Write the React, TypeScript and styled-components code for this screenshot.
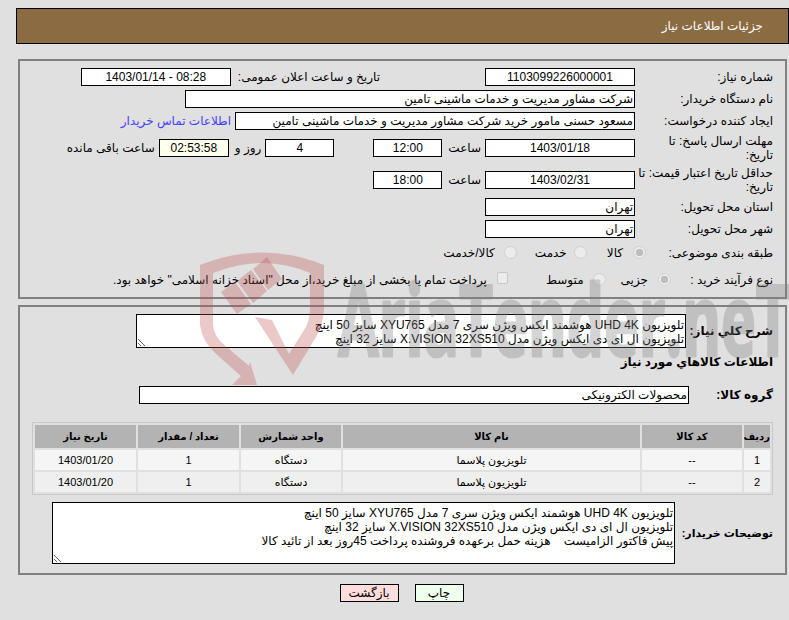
import styled, { createGlobalStyle } from 'styled-components'

const line1 = 'تلویزیون UHD 4K هوشمند ایکس ویژن سری 7 مدل XYU765 سایز 50 اینچ'
const line2 = 'تلویزیون ال ای دی ایکس ویژن مدل X.VISION 32XS510 سایز 32 اینچ'
const line3 = 'پیش فاکتور الزامیست    هزینه حمل برعهده فروشنده پرداخت 45روز بعد از تائید کالا'

const items = [
    { row: 1, code: '--', name: 'تلویزیون پلاسما', unit: 'دستگاه', count: 1, date: '1403/01/20' },
    { row: 2, code: '--', name: 'تلویزیون پلاسما', unit: 'دستگاه', count: 1, date: '1403/01/20' },
]

export default function App() {
    return (
        <Page dir="rtl">
            <GlobalStyle />
            <Header>جزئیات اطلاعات نیاز</Header>

            <InfoPanel>
                <Row>
                    <Label>شماره نیاز:</Label>
                    <Field $w={150} $center>1103099226000001</Field>
                    <Text $mr={105}>تاریخ و ساعت اعلان عمومی:</Text>
                    <Field $w={150} $mr={7} $center dir="ltr">1403/01/14 - 08:28</Field>
                </Row>
                <Row>
                    <Label>نام دستگاه خریدار:</Label>
                    <Field $w={450}>شرکت مشاور مدیریت و خدمات ماشینی تامین</Field>
                </Row>
                <Row>
                    <Label>ایجاد کننده درخواست:</Label>
                    <Field $w={400}>مسعود حسنی مامور خرید شرکت مشاور مدیریت و خدمات ماشینی تامین</Field>
                    <ContactLink href="#" $mr={4}>اطلاعات تماس خریدار</ContactLink>
                </Row>
                <Row $h={32}>
                    <Label>مهلت ارسال پاسخ: تا<br />تاریخ:</Label>
                    <Field $w={150} $center>1403/01/18</Field>
                    <Text $mr={4}>ساعت</Text>
                    <Field $w={69} $mr={6} $center>12:00</Field>
                    <Field $w={69} $mr={39} $center>4</Field>
                    <Text $mr={4}>روز و</Text>
                    <Field $w={70} $mr={6} $center $bg="#ffffee">02:53:58</Field>
                    <Text $mr={4}>ساعت باقی مانده</Text>
                </Row>
                <Row $h={32}>
                    <Label>حداقل تاریخ اعتبار قیمت: تا<br />تاریخ:</Label>
                    <Field $w={150} $center>1403/02/31</Field>
                    <Text $mr={4}>ساعت</Text>
                    <Field $w={69} $mr={6} $center>18:00</Field>
                </Row>
                <Row>
                    <Label>استان محل تحویل:</Label>
                    <Field $w={150}>تهران</Field>
                </Row>
                <Row>
                    <Label>شهر محل تحویل:</Label>
                    <Field $w={150}>تهران</Field>
                </Row>
                <Row $h={26}>
                    <Label $w={127} $gap={0}>طبقه بندی موضوعی:</Label>
                    <Radio name="category" disabled defaultChecked />
                    <Text $mr={10}>کالا</Text>
                    <Radio name="category" disabled $mr={20} />
                    <Text $mr={7}>خدمت</Text>
                    <Radio name="category" disabled $mr={18} />
                    <Text $mr={9}>کالا/خدمت</Text>
                </Row>
                <Row $h={28}>
                    <Label $w={102} $gap={0}>نوع فرآیند خرید :</Label>
                    <Radio name="process" disabled defaultChecked />
                    <Text $mr={10}>جزیی</Text>
                    <Radio name="process" disabled $mr={15} />
                    <Text $mr={9}>متوسط</Text>
                    <Check disabled $mr={38} />
                    <Text $mr={10}>پرداخت تمام یا بخشی از مبلغ خرید،از محل "اسناد خزانه اسلامی" خواهد بود.</Text>
                </Row>
            </InfoPanel>

            <GoodsPanel>
                <Row $h={34}>
                    <Label $w={87} $gap={0} $bold>شرح کلي نیاز:</Label>
                    <Notes $w={550} $h={34} readOnly defaultValue={`${line1}\n${line2}`} />
                </Row>
                <SectionTitle>اطلاعات کالاهاي مورد نياز</SectionTitle>
                <Row $h={18}>
                    <Label $w={84} $gap={0} $bold>گروه کالا:</Label>
                    <Field $w={550}>محصولات الکترونیکی</Field>
                </Row>
                <GoodsTable>
                    <thead>
                        <tr>
                            <HeadCell $w={26}>ردیف</HeadCell>
                            <HeadCell $w={100}>کد کالا</HeadCell>
                            <HeadCell $w={297}>نام کالا</HeadCell>
                            <HeadCell $w={100}>واحد شمارش</HeadCell>
                            <HeadCell $w={101}>تعداد / مقدار</HeadCell>
                            <HeadCell $w={101}>تاریخ نیاز</HeadCell>
                        </tr>
                    </thead>
                    <tbody>
                        {items.map((item) => (
                            <GoodsRow key={item.row}>
                                <td>{item.row}</td>
                                <td>{item.code}</td>
                                <td>{item.name}</td>
                                <td>{item.unit}</td>
                                <td>{item.count}</td>
                                <td>{item.date}</td>
                            </GoodsRow>
                        ))}
                    </tbody>
                </GoodsTable>
                <Row $h={62}>
                    <Label $w={98} $gap={0} $bold $size={11}>توضیحات خریدار:</Label>
                    <Notes $w={623} $h={62} readOnly defaultValue={`${line1}\n${line2}\n${line3}`} />
                </Row>
            </GoodsPanel>

            <Actions>
                <ActionButton $bg="#eeffee" $w={49}>چاپ</ActionButton>
                <ActionButton $bg="#ffdddd" $w={59}>بازگشت</ActionButton>
            </Actions>

            <Watermark viewBox="0 0 594 141" aria-hidden="true">
                {/* shield, gavel and arrow of the logo */}
                <g fill="rgba(190,77,77,0.3)">
                    <path d="M5 20 Q68 -5 129 20 L129 65 Q128 80 121 92 L98 130 L60 72 L77 75 L94 109 L111 82 Q115 73 115 62 L115 28 Q68 8 18 28 L18 80 Q19 90 26 97 L54 121 L55 117 L62 140 L37 140 L46 131 L20 108 Q7 96 5 80 Z" />
                    <path d="M26 47 L40 37 L56 59 L42 69 Z" />
                    <path d="M42 36 L56 25 L72 46 L58 58 Z" />
                    <path d="M58 24 L72 12 L87 34 L73 45 Z" />
                </g>
                <WatermarkText x="143" y="111" textLength="452" lengthAdjust="spacingAndGlyphs">AriaTender.neT</WatermarkText>
            </Watermark>
        </Page>
    )
}

const GlobalStyle = createGlobalStyle`
    html, body {
        margin: 0;
        background: #e0e0e0;
        overflow: hidden;
    }
    * {
        box-sizing: border-box;
    }
`

const Page = styled.div`
    position: relative;
    width: 789px;
    height: 620px;
    padding-top: 8px;
    font-family: "Liberation Sans", "DejaVu Sans", sans-serif;
    font-size: 12px;
    color: #000;
`

const Header = styled.div`
    display: flex;
    align-items: center;
    width: 773px;
    height: 36px;
    margin-right: 0;
    margin-left: 16px;
    padding-right: 25px;
    background: #8b6b42;
    border: 1px solid #000;
    color: #fff;
    font-size: 12px;
`

const Panel = styled.div`
    width: 769px;
    margin: 0 2px 0 18px;
    padding-right: 12px;
    border: 2px solid #808080;
`

const InfoPanel = styled(Panel)`
    height: 240px;
    margin-top: 15px;
    padding-top: 5px;
`

const GoodsPanel = styled(Panel)`
    height: 270px;
    margin-top: 6px;
    padding-top: 7px;
`

const Row = styled.div<{ $h?: number }>`
    display: flex;
    align-items: center;
    height: ${(p) => p.$h ?? 22}px;
`

const Label = styled.div<{ $w?: number; $gap?: number; $bold?: boolean; $size?: number }>`
    flex: none;
    width: ${(p) => p.$w ?? 133}px;
    margin-left: ${(p) => p.$gap ?? 5}px;
    font-size: ${(p) => p.$size ?? 12}px;
    font-weight: ${(p) => (p.$bold ? 'bold' : 'normal')};
    line-height: 14px;
    white-space: nowrap;
`

const Text = styled.span<{ $mr?: number }>`
    flex: none;
    margin-right: ${(p) => p.$mr ?? 0}px;
`

const ContactLink = styled.a<{ $mr?: number }>`
    margin-right: ${(p) => p.$mr ?? 0}px;
    color: #3f3fff;
    text-decoration: none;
`

const Field = styled.div<{ $w: number; $mr?: number; $center?: boolean; $bg?: string }>`
    flex: none;
    width: ${(p) => p.$w}px;
    height: 18px;
    margin-right: ${(p) => p.$mr ?? 0}px;
    padding: 0 1px;
    background: ${(p) => p.$bg ?? '#fff'};
    border: 1px solid #000;
    line-height: 16px;
    text-align: ${(p) => (p.$center ? 'center' : 'right')};
    white-space: nowrap;
    overflow: hidden;
`

const Radio = styled.input.attrs({ type: 'radio' })<{ $mr?: number }>`
    appearance: none;
    flex: none;
    width: 13px;
    height: 13px;
    margin: -2px ${(p) => p.$mr ?? 0}px 0 0;
    background: #ececec;
    border: 1px solid #d0d0d0;
    border-radius: 50%;

    &:checked {
        background: radial-gradient(circle, #bdbdbd 0 3.5px, #ececec 4px);
    }
`

const Check = styled.input.attrs({ type: 'checkbox' })<{ $mr?: number }>`
    appearance: none;
    flex: none;
    width: 11px;
    height: 12px;
    margin: -4px ${(p) => p.$mr ?? 0}px 0 0;
    background: #ececec;
    border: 1px solid #c8c8c8;
    border-radius: 2px;
`

const Notes = styled.textarea<{ $w: number; $h: number }>`
    flex: none;
    width: ${(p) => p.$w}px;
    height: ${(p) => p.$h}px;
    padding: 3px 1px 0;
    background: #fff;
    border: 1px solid #000;
    border-radius: 0;
    outline: none;
    overflow: hidden;
    font: 12px/14px "Liberation Sans", "DejaVu Sans", sans-serif;
    color: #000;
    resize: both;
`

const SectionTitle = styled.div`
    margin-top: 7px;
    margin-bottom: 17px;
    height: 14px;
    font-weight: bold;
    line-height: 14px;
`

const GoodsTable = styled.table`
    width: 741px;
    margin-top: 18px;
    margin-bottom: 7px;
    border: 1px solid #c8c8c8;
    border-spacing: 2px;
    font-size: 11px;
    table-layout: fixed;
`

const HeadCell = styled.th<{ $w: number }>`
    width: ${(p) => p.$w}px;
    height: 23px;
    padding: 0;
    background: #b3b3b3;
    font-size: 10px;
    white-space: nowrap;
`

const GoodsRow = styled.tr`
    td {
        height: 20px;
        padding: 0;
        text-align: center;
    }
    &:nth-child(odd) td {
        background: #f5f5f5;
    }
    &:nth-child(even) td {
        background: #efefef;
    }
`

const Actions = styled.div`
    display: flex;
    justify-content: center;
    gap: 16px;
    width: 769px;
    margin: 9px 3px 0 17px;
`

const ActionButton = styled.button<{ $bg: string; $w: number }>`
    width: ${(p) => p.$w}px;
    height: 18px;
    padding: 0;
    background: ${(p) => p.$bg};
    border: 1px solid #000;
    font: 12px "Liberation Sans", "DejaVu Sans", sans-serif;
    color: #000;
`

const Watermark = styled.svg`
    position: absolute;
    left: 195px;
    top: 245px;
    width: 594px;
    height: 141px;
    direction: ltr;
    pointer-events: none;
`

const WatermarkText = styled.text`
    direction: ltr;
    font-family: "Open Sans", sans-serif;
    font-size: 98px;
    font-weight: bold;
    fill: #808080;
    stroke: #808080;
    stroke-width: 3px;
    stroke-linejoin: round;
    opacity: 0.33;
`
